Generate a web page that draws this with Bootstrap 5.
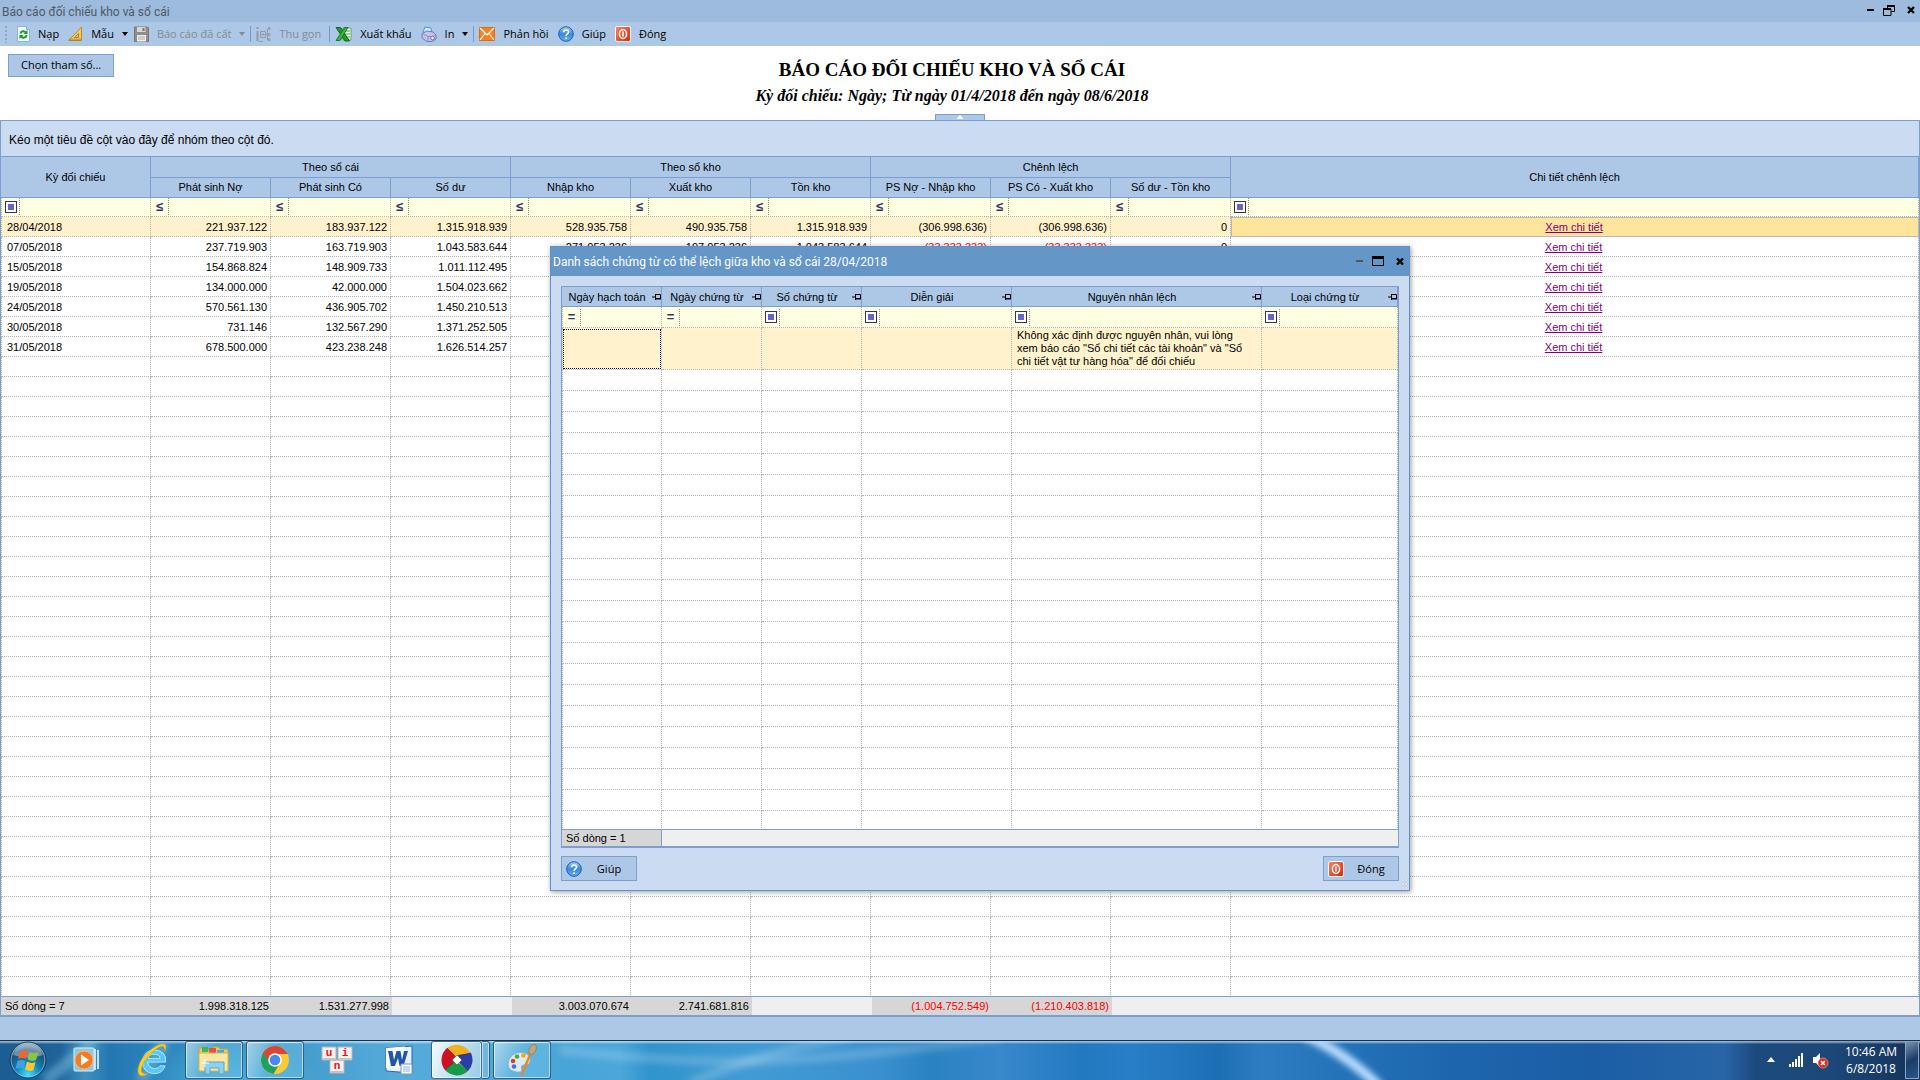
<!DOCTYPE html>
<html lang="vi">
<head>
<meta charset="utf-8">
<meta name="viewport" content="width=device-width, initial-scale=1">
<title>Báo cáo đối chiếu kho và sổ cái</title>
<link href="https://cdn.jsdelivr.net/npm/bootstrap@5.3.0/dist/css/bootstrap.min.css" rel="stylesheet">
<style>
:root { --line:#7ba0cf; --head:#adc7e6; --panel:#cbdbf1; --dots:#b4b4b4; }
body { font-family:"Liberation Sans",Arial,sans-serif; font-size:11px; line-height:14px; color:#000; background:#fff; }
button { font:inherit; color:inherit; background:none; border:0; padding:0; }
svg { display:block; flex:none; }
.ui-text { font-family:"Open Sans","Noto Sans",sans-serif; font-size:11px; line-height:16px; }
.app-title { height:22px; background:#9dbbdc; color:#4d5a68; padding:4px 5px 0 2px; font:12px/16px Roboto,"Noto Sans",sans-serif; }
.tool-strip { height:24px; background:var(--head); padding-left:4px; }
.tool-strip button { display:flex; align-items:center; gap:8px; margin-left:9px; }
.tool-strip .drop + button { margin-left:6px; }
.tool-strip button:disabled { color:#858a92; }
.grip { width:4px; height:18px; background:radial-gradient(circle,#8ea6c4 1px,transparent 1px) 0 0/4px 4px; }
.divider { width:1px; height:16px; background:#6f9dd2; margin-left:8px; margin-right:-4px; }
.drop + .divider { margin-left:5px; }
.drop::after { content:""; border:3px solid transparent; border-top:4px solid; border-bottom:0; }
.report-head { height:74px; }
.report-head h1 { font:bold 19px/22px "Liberation Serif","Times New Roman",serif; margin:0; padding-top:13px; }
.report-head h2 { font:italic bold 16px/20px "Liberation Serif","Times New Roman",serif; margin:5px 0 0; }
.report-titles { padding-right:16px; }
.param-btn { left:8px; top:8px; height:23px; padding:0 12px; background:var(--head); border:1px solid var(--line); white-space:nowrap; }
.fold { left:50%; margin-left:-25px; bottom:0; width:50px; height:6px; background:var(--head); border:1px solid var(--line); border-bottom:0; }
.fold svg { margin:0 auto; }
.group-hint { height:36px; background:var(--panel); border-bottom:1px solid var(--line); padding:3px 0 0 8px; font-size:12px; }
.sheet { border:1px solid var(--line); border-bottom-width:2px; background:#fff; min-height:0; }
.sheet-body { overflow:hidden; min-height:0; }
.sheet table { width:100%; table-layout:fixed; border-collapse:separate; border-spacing:0; }
.sheet th { background:var(--head); border:solid var(--line); border-width:0 1px 1px 0; font-weight:400; text-align:center; padding:0; height:20px; }
.sheet th.tall { height:21px; }
.sheet td { height:20px; padding:1px 3px 0 6px; border:dotted var(--dots); border-width:0 1px 1px 0; white-space:nowrap; overflow:hidden; }
.sheet td:first-child { border-left:1px dotted var(--dots); padding-left:5px; }
.num { text-align:right; }
.sheet td.detail { padding:1px 3px 0 1px; text-align:center; }
.sheet tr.filter td { background:#ffffe1; height:19px; padding:0; }
.op { width:17px; height:17px; border-right:1px dotted #888; flex:none; color:#33336b; font-size:13px; font-weight:bold; box-sizing:content-box; }
.op.box::before { content:""; display:block; width:12px; height:12px; margin-left:3px; border:1px solid #33336b; background:#6464cc; box-shadow:inset 0 0 0 2px #fffff0; }
.filter input { border:0; background:transparent; min-width:0; width:100%; height:17px; padding:0 3px; outline:0; }
.current td { background:#fff2cc; }
.sheet .current td.picked { background:#ffe49c; border:1px solid #b9b9b9; }
.neg { color:#f00; }
.sheet a { color:purple; }
.totals { border-top:1px solid var(--line); background:#efefef; }
.sheet .totals td { border:0; height:18px; padding:0 3px 0 4px; }
.totals .sum { background:#d6d6d6; }
.status { height:23px; background:var(--head); }

.dialog-win { left:550px; top:246px; width:860px; background:var(--panel); border:1px solid #5f93c8; box-shadow:1px 1px 5px rgba(0,0,0,.4); }
.dialog-title { height:29px; background:#6496c8; color:#fff; padding:0 5px 0 2px; font:12px/16px Roboto,"Noto Sans",sans-serif; }
.dialog-body { padding:10px 10px 9px; }
.dialog-win .sheet-body { height:542px; }
.dialog-win td { height:21px; }
.dialog-win .sheet tr.filter td { height:21px; }
.dialog-win th .cap { flex:1 1 auto; }
.dialog-win .sheet .current td { height:42px; white-space:normal; line-height:13px; vertical-align:middle; padding:0 10px 0 5px; }
.dialog-win .sheet .current td.focus-cell { outline:1px dotted #000; outline-offset:-2px; }
.dialog-win .sheet .totals td { height:16px; }
.dialog-win .totals td.sum { border-right:1px solid var(--line); }
.dlg-btn { width:76px; height:25px; background:var(--head); border:1px solid var(--line); display:flex; align-items:center; padding-left:4px; }
.dlg-btn span { flex:1; text-align:center; }
.foot-row { margin-top:8px; }
.resize { right:1px; bottom:1px; }

.task { height:40px; border-top:1px solid #17324f; color:#fff;
 background:
  linear-gradient(180deg,rgba(255,255,255,.5) 0 1px,transparent 3px),
  radial-gradient(ellipse 90px 40px at 230px 40px,rgba(90,195,235,.5),transparent),
  linear-gradient(90deg,#1c5d93 0,#1e6499 60px,#3f90c0 85px,#2478b2 110px,#338fc4 200px,#56abd8 400px,#48a5d7 570px,#4ba7d9 620px,#3094cc 650px,#419bd4 750px,#3a90cf 880px,#2a82c2 930px,#3888cb 1000px,#2379c0 1080px,#287fc7 1130px,#1d6fb4 1220px,#2e7cc2 1260px,#2473b8 1340px,#1d66ad 1450px,#1b5ea6 1590px,#2765a6 1725px,#1d4a7e 1755px,#1c4878 1830px,#15325a 100%); }
.streaks { inset:0; width:100%; height:39px; }
.tb { height:38px; width:58px; display:flex; align-items:center; justify-content:center; }
.tb.open { border:1px solid rgba(20,60,100,.75); border-radius:3px; background:linear-gradient(115deg,rgba(255,255,255,.55),rgba(150,220,245,.28) 45%,rgba(120,205,240,.35)); box-shadow:inset 0 0 0 1px rgba(255,255,255,.55); margin-left:3px; }
.tb.open.front { width:51px; background:linear-gradient(110deg,#f4fafd,#b8dcf0 60%,#9acbe6); }
.tb.open.stack { width:8px; margin-left:0; background:rgba(130,195,230,.6); border-left:0; border-radius:0 3px 3px 0; }
.tray { gap:8px; }
.tray .more { margin-right:4px; }
.clock { font-size:12px; line-height:17px; width:68px; }
.peek { width:14px; height:38px; border:1px solid #8aa4c0; background:linear-gradient(150deg,#7d93ab,#1a3d66 50%,#24588f); margin-right:1px; }
</style>
<script src="https://cdn.jsdelivr.net/npm/bootstrap@5.3.0/dist/js/bootstrap.bundle.min.js"></script>
</head>
<body>
<svg width="0" height="0" class="position-absolute" aria-hidden="true">
 <defs>
  <linearGradient id="gBlue" x1="0" y1="0" x2="0" y2="1"><stop offset="0" stop-color="#9ad0ff"/><stop offset=".5" stop-color="#3b86e0"/><stop offset="1" stop-color="#5fb4f5"/></linearGradient>
  <linearGradient id="gRed" x1="0" y1="0" x2="1" y2="1"><stop offset="0" stop-color="#f5876a"/><stop offset="1" stop-color="#cf2a05"/></linearGradient>
  <symbol id="i-help" viewBox="0 0 16 16"><circle cx="8" cy="8" r="7.3" fill="url(#gBlue)" stroke="#1a5fae"/><path d="M5.6 6.2C5.6 3.2 10.6 3.2 10.6 6.1 10.6 7.9 8.1 8 8.1 9.9M8.1 11.3v1.6" fill="none" stroke="#fff" stroke-width="1.6"/></symbol>
  <symbol id="i-power" viewBox="0 0 16 16"><rect x=".5" y=".5" width="15" height="15" rx="1.5" fill="url(#gRed)" stroke="#fff3ee"/><ellipse cx="8" cy="8" rx="3.6" ry="4.4" fill="none" stroke="#fff" stroke-width="1.5"/><path d="M8 5.5v5" stroke="#fff" stroke-width="1.6"/></symbol>
  <symbol id="i-pin" viewBox="0 0 9 8"><path d="M0 4h3M3.500 1v6M3.500 1.500h5v4M3.500 5.500h5" fill="none" stroke="#000" stroke-width="1"/><path d="M3 5h6v1.500H3z"/></symbol>
  <symbol id="i-x" viewBox="0 0 8 8"><path d="M1 1l6 6M7 1L1 7" stroke="#000" stroke-width="2.3"/></symbol>
 </defs>
</svg>

<div class="d-flex flex-column vh-100 overflow-hidden position-relative">
 <header class="app-title d-flex justify-content-between">
  <span>Báo cáo đối chiếu kho và sổ cái</span>
  <div class="d-flex align-items-start gap-2">
   <button aria-label="Thu nhỏ"><svg width="9" height="11"><path d="M1 6h7" stroke="#000" stroke-width="2"/></svg></button>
   <button aria-label="Khôi phục"><svg width="12" height="12"><path d="M4.500 4.500v-3h7v6h-3M.5 5h7.500v6.500h-7.500z" fill="none" stroke="#000"/><path d="M4 2h8M0 5h8" stroke="#000" stroke-width="2"/></svg></button>
   <button class="ms-1" aria-label="Đóng cửa sổ"><svg width="8" height="12"><use href="#i-x"/></svg></button>
  </div>
 </header>

 <nav class="tool-strip ui-text d-flex align-items-center" aria-label="Thanh công cụ">
  <span class="grip"></span>
  <button><svg width="13" height="16"><path d="M.5.500h9l3 3v12h-12z" fill="#f3faff" stroke="#8cb4dc"/><path d="M9.500.500v3h3" fill="#c8dcf0" stroke="#7ba7d6"/><path d="M3.500 7.500C4 5 7 4.500 9 6.500M9.500 9C9 12 6 12.500 4 10.500" fill="none" stroke="#14a01e" stroke-width="2"/><path d="M10.500 4v4H6.500zM2.500 13V9h4z" fill="#14a01e"/></svg>Nạp</button>
  <button class="drop"><svg width="15" height="16"><path d="M13.500 1v13.500H.7z" fill="#f3c964" stroke="#c08a26"/><path d="M10.500 7.500v4h-4z" fill="#adc7e6" stroke="#b98424"/><path d="M2 14.500v-2M4 14.500v-2M6 14.500v-2M8 14.500v-2M10 14.500v-2M12 14.500v-2" stroke="#8a5a12" stroke-width=".7"/></svg>Mẫu</button>
  <button class="drop" disabled><svg width="15" height="16"><path d="M.5 1h13l1 1v13.500H.5z" fill="#8d8d8d" stroke="#777"/><path d="M3 1h8.500v5H3z" fill="#d7d7d7"/><path d="M8.500 2h2v3h-2z" fill="#777"/><path d="M3 9h9v6.500H3z" fill="#eee"/><path d="M4 11h7M4 13h7" stroke="#aaa"/></svg>Báo cáo đã cất</button>
  <span class="divider"></span>
  <button disabled><svg width="15" height="16" fill="none" stroke="#939aa3"><path d="M1.500 5v10M1.500 1v2" stroke-width="2"/><path d="M4.500 5.500h5v6h-5zM7 7v3M5.500 8.500h3M9.500 8.500h2M11.500 3v11M11.500 3h1M11.500 14h1M3 15.500h4"/><path d="M12.500 1.500h1.500v2h-1.500zM12.500 7.500h1.500v2h-1.500zM12.500 12.500h1.500v2h-1.500z"/></svg>Thu gọn</button>
  <span class="divider"></span>
  <button><svg width="17" height="16"><path d="M8 2h8v12H7z" fill="#e9f6e6" stroke="#6aa76a"/><path d="M10 5h5M10 8h5M10 11h5" stroke="#58a058"/><path d="M1 1.500h4.500L14.500 15h-4.500z" fill="#1f9a2e" stroke="#0d6b1a"/><path d="M13 1.500H9.500L1 14.500h4z" fill="#37b545" stroke="#0d6b1a" stroke-width=".8"/></svg>Xuất khẩu</button>
  <button class="drop"><svg width="16" height="16"><path d="M2 6L4 1l6 1 1 6z" fill="#cfe9ff" stroke="#4c93dc"/><path d="M1 7.500L6 5l6 1 3 3v4l-4 2.500H6L1 12z" fill="#c3c4ea" stroke="#7276b5"/><path d="M1 7.500l6 3h4l4-1.500M7 10.500v5" fill="none" stroke="#8d90c8"/><circle cx="11.500" cy="12" r="1.800" fill="#eef" stroke="#7276b5"/></svg>In</button>
  <span class="divider"></span>
  <button><svg width="16" height="14"><path d="M.5.500h15v13H.5z" fill="#f58220" stroke="#e8650a"/><path d="M1 1l7 7 7-7M1 13l5-6.500M15 13l-5-6.500" fill="none" stroke="#fff" stroke-width="1.200"/></svg>Phản hồi</button>
  <button><svg width="16" height="16"><use href="#i-help"/></svg>Giúp</button>
  <button><svg width="16" height="16"><use href="#i-power"/></svg>Đóng</button>
 </nav>

 <section class="report-head position-relative">
  <button class="param-btn ui-text position-absolute">Chọn tham số...</button>
  <div class="report-titles text-center">
   <h1>BÁO CÁO ĐỐI CHIẾU KHO VÀ SỔ CÁI</h1>
   <h2>Kỳ đối chiếu: Ngày; Từ ngày 01/4/2018 đến ngày 08/6/2018</h2>
  </div>
  <button class="fold position-absolute" aria-label="Thu gọn phần tiêu đề"><svg width="6" height="4"><path d="M3 0l3 3v1H0V3z" fill="#fff"/></svg></button>
 </section>

 <main class="sheet d-flex flex-column flex-grow-1">
  <div class="group-hint d-flex align-items-center flex-shrink-0">Kéo một tiêu đề cột vào đây để nhóm theo cột đó.</div>
  <div class="sheet-body flex-grow-1">
   <table id="mainGrid">
    <colgroup><col style="width:150px"><col span="9" style="width:120px"><col></colgroup>
    <thead>
     <tr><th class="tall" rowspan="2">Kỳ đối chiếu</th><th class="tall" colspan="3">Theo sổ cái</th><th class="tall" colspan="3">Theo sổ kho</th><th class="tall" colspan="3">Chênh lệch</th><th class="tall" rowspan="2">Chi tiết chênh lệch</th></tr>
     <tr><th>Phát sinh Nợ</th><th>Phát sinh Có</th><th>Số dư</th><th>Nhập kho</th><th>Xuất kho</th><th>Tồn kho</th><th>PS Nợ - Nhập kho</th><th>PS Có - Xuất kho</th><th>Số dư - Tồn kho</th></tr>
    </thead>
    <tbody></tbody>
   </table>
  </div>
  <table class="totals flex-shrink-0">
   <colgroup><col style="width:151px"><col span="9" style="width:120px"><col></colgroup>
   <tbody><tr><td class="sum border-0">Số dòng = 7</td><td class="sum num">1.998.318.125</td><td class="sum num">1.531.277.998</td><td></td><td class="sum num">3.003.070.674</td><td class="sum num">2.741.681.816</td><td></td><td class="sum num neg">(1.004.752.549)</td><td class="sum num neg">(1.210.403.818)</td><td></td><td></td></tr></tbody>
  </table>
 </main>
 <div class="status flex-shrink-0"></div>

 <footer class="task ui-text d-flex align-items-center position-relative flex-shrink-0">
  <svg class="streaks position-absolute" viewBox="0 0 1920 39" preserveAspectRatio="none" aria-hidden="true">
   <defs><filter id="soft"><feGaussianBlur stdDeviation="3"/></filter></defs>
   <g filter="url(#soft)" fill="none">
    <path d="M560 9Q700 25 800 18T1000 -4" stroke="#fff" stroke-opacity=".18" stroke-width="9"/>
    <path d="M690 42Q770 8 850 -4" stroke="#fff" stroke-opacity=".18" stroke-width="10"/>
    <path d="M1305 -6Q1345 12 1380 46" stroke="#b9dcff" stroke-width="10"/>
    <path d="M45 40L95 0M140 40L165 0" stroke="#8fd0ef" stroke-opacity=".4" stroke-width="12"/>
   </g>
  </svg>
  <button class="tb position-relative" aria-label="Start"><svg width="40" height="38" viewBox="0 0 40 38">
   <defs><radialGradient id="orb" cx=".5" cy=".9" r=".9"><stop offset="0" stop-color="#3de0ff"/><stop offset=".4" stop-color="#0f7fb4"/><stop offset=".75" stop-color="#1b4f78"/><stop offset="1" stop-color="#9db9cb"/></radialGradient></defs>
   <circle cx="19" cy="19" r="18" fill="url(#orb)" stroke="#17405f"/><circle cx="19" cy="19" r="16.800" fill="none" stroke="#a8d3e8" stroke-opacity=".6"/>
   <path d="M4 14Q8 3 19 3t15 11q-14 5-30 0z" fill="#fff" opacity=".35"/>
   <path d="M11 11q4-3 8-1l-2 8q-4-2-8 0z" fill="#f0642d"/><path d="M20.500 11q4 2 9 0l-2.500 8q-4 2-8.500-.500z" fill="#8cc63f"/><path d="M8.500 20q4-2 8 0l-2 8q-4-2-8 0z" fill="#3fa0e8"/><path d="M18 20.500q4 2.500 8.500.500l-2 8q-4 2-8.500-.500z" fill="#fdc62f"/></svg></button>
  <button class="tb position-relative" aria-label="Windows Media Player"><svg width="28" height="28"><path d="M25 4v19M22 3v21" stroke="#bfe3f5" stroke-width="2"/><rect x="1" y="2" width="20" height="23" rx="1" fill="#8cc8e6" stroke="#d7eef9"/><circle cx="11" cy="14" r="9" fill="#f47b20" stroke="#fbb36b"/><path d="M8 8.500l8 5.500-8 5.500z" fill="#fff"/></svg></button>
  <button class="tb position-relative ms-2" aria-label="Internet Explorer"><svg width="34" height="36" viewBox="0 0 32 34"><path d="M28 19H11q1 6 6.500 6 4 0 5-2.500h5Q25 30 17 30 6 29 6 18.500 7 8 17 7.500 29 8 28 19zM11.500 15.500h11.300Q22 11.500 17 11.500t-5.500 4z" fill="#58c8f4" stroke="#d6f3ff" stroke-width=".7"/><path d="M27 9q3-6-1-7-5-1-14 7T2 25q-1 7 4 7 2 0 5-2-7 1-6-5 2-8 10-15t10.500-6q2 1 1.500 5z" fill="#fcd116" stroke="#dd9d10" stroke-width=".5"/></svg></button>
  <button class="tb open position-relative" aria-label="Windows Explorer"><svg width="34" height="32"><path d="M2 4h6l1 2h7V3h6l1 2h8v21H2z" fill="#e8c968" stroke="#c6a03c"/><path d="M5 3h6v5H5z" fill="#3fb54a"/><path d="M12 4h7v5h-7z" fill="#e2543c"/><path d="M20 6h7v5h-7z" fill="#4aa6e8"/><path d="M2 9h29v18H2z" fill="#f9e6a0" stroke="#d5b252"/><path d="M8 18h19v12h-5v-6h-9v6H8z" fill="#8cd1ee" stroke="#55a8cf"/><path d="M8 15v8M4 19h8" stroke="#fff"/></svg></button>
  <button class="tb open position-relative" aria-label="Google Chrome"><svg width="30" height="30" viewBox="0 0 30 30"><circle cx="15" cy="15" r="14" fill="#fbc933"/><path d="M15 15L2.900 8A14 14 0 0127.100 8L28 9H15z" fill="#dc4437"/><path d="M2.900 8A14 14 0 0013.500 29l6.500-11-5 3z" fill="#1fa15d"/><path d="M2.900 8L10 19l5-4V9z" fill="#1fa15d"/><path d="M2.900 8A14 14 0 0127.200 8.500H15Q10 9 9.200 16z" fill="#dc4437"/><circle cx="15" cy="15" r="6.800" fill="#fff"/><circle cx="15" cy="15" r="5.300" fill="#4a87ee"/></svg></button>
  <button class="tb position-relative ms-1" aria-label="UniKey"><svg width="32" height="28" font-family="Liberation Mono,monospace" font-weight="bold" font-size="11" fill="#e01818" text-anchor="middle"><path d="M1 1h14v13H1zM17 1h14v13H17zM9 14h14v13H9z" fill="#f5f1f0" stroke="#b8b4b4"/><path d="M2 13h12M18 13h12M10 26h12" stroke="#c9c4c4" stroke-width="2"/><text x="8" y="10">u</text><text x="24" y="10">i</text><text x="16" y="23">n</text></svg></button>
  <button class="tb position-relative ms-1" aria-label="Microsoft Word"><svg width="30" height="32"><path d="M2 4L28 2v27L2 27z" fill="#e8f1fb" stroke="#2b62b4"/><path d="M2 4l19-1.500v20L2 24z" fill="#fff"/><path d="M4 7h4.500l1.500 9 2.500-9h4l1.500 9 2-9H24l-4.500 15h-4L14 14l-3 8H7z" fill="#1f56ad"/><path d="M17 20h11v10H17z" fill="#fff" stroke="#6d9bd8"/><path d="M19 23h7M19 25h7M19 27h7" stroke="#8fb4e4"/></svg></button>
  <button class="tb open front position-relative" aria-label="MISA"><svg width="34" height="34" viewBox="-17 -17 34 34"><path d="M-10-12A16 16 0 0114-6L1-4-2-3z" fill="#f2ae1c"/><path d="M14-7A16 16 0 0111 11L3 3 1-5z" fill="#2a3ea8"/><path d="M11 11A16 16 0 01-12 10L-3 1 3 4z" fill="#169a48"/><path d="M-12 10A16 16 0 01-10-12l9 9-3 6z" fill="#cf1126"/><path d="M-10-12L-1-3M14-7L2-4M11 11L2 2M-12 10l9-8" stroke="#333" stroke-width=".6"/><path d="M0-5l5 5-5 5-5-5z" fill="#fff" stroke="#333" stroke-width=".5"/></svg></button>
  <span class="tb open stack position-relative"></span>
  <button class="tb open position-relative" aria-label="Paint"><svg width="34" height="34"><path d="M4 16q6-9 16-6 8 4 4 11-3 2-6 1-3 1-1 4 0 4-6 3Q0 27 4 16z" fill="#dbeaf6" stroke="#86acca"/><circle cx="8" cy="18" r="2.300" fill="#e23b2c"/><circle cx="12" cy="13.500" r="2.300" fill="#49a942"/><circle cx="18.500" cy="12.500" r="2.300" fill="#f3a51c"/><circle cx="9" cy="23.500" r="2.300" fill="#3c78d0"/><path d="M27 7L17 31" stroke="#e08a2e" stroke-width="2.600" stroke-linecap="round"/><path d="M24 10q-1-7 6-9 4 5-3 11z" fill="#c9a47a" stroke="#8d6a43" stroke-width=".6"/></svg></button>

  <div class="tray d-flex align-items-center ms-auto position-relative">
   <button aria-label="Hiện biểu tượng ẩn" class="more"><svg width="10" height="6"><path d="M5 0l4 5H1z" fill="#fff"/></svg></button>
   <svg width="16" height="16" fill="#fff"><path d="M1 12h2v3H1zM4 10h2v5H4zM7 7h2v8H7zM10 4h2v11h-2zM13 1h2v14h-2z"/></svg>
   <svg width="17" height="18"><path d="M1 6h3l4-4v14l-4-4H1z" fill="#fff"/><circle cx="11" cy="12" r="5" fill="#dd2a1b" stroke="#f7b0a8" stroke-width=".6"/><path d="M9 10l4 4M13 10l-4 4" stroke="#fff" stroke-width="1.500"/></svg>
   <div class="d-flex align-items-center"><div class="clock text-center">10:46 AM<br>6/8/2018</div>
   <button class="peek" aria-label="Hiện màn hình nền"></button></div>
  </div>
 </footer>

 <section class="dialog-win position-absolute" role="dialog" aria-labelledby="dlgTitle">
  <div class="dialog-title d-flex justify-content-between align-items-center">
   <span id="dlgTitle">Danh sách chứng từ có thể lệch giữa kho và sổ cái 28/04/2018</span>
   <div class="d-flex gap-2">
    <button aria-label="Thu nhỏ"><svg width="9" height="10"><path d="M1 4h7" stroke="#555" stroke-width="2"/></svg></button>
    <button aria-label="Phóng to"><svg width="12" height="11"><path d="M.5.500h11v9H.5z" fill="none" stroke="#000"/><path d="M0 1.500h12" stroke="#000" stroke-width="3"/></svg></button>
    <button class="ms-1" aria-label="Đóng hộp thoại"><svg width="8" height="9"><use href="#i-x"/></svg></button>
   </div>
  </div>
  <div class="dialog-body">
   <div class="sheet">
    <div class="sheet-body">
     <table id="dlgGrid">
      <colgroup><col span="3" style="width:100px"><col style="width:150px"><col style="width:250px"><col></colgroup>
      <thead><tr></tr></thead>
      <tbody></tbody>
     </table>
    </div>
    <table class="totals">
     <colgroup><col style="width:100px"><col></colgroup>
     <tbody><tr><td class="sum border-start-0">Số dòng = 1</td><td></td></tr></tbody>
    </table>
   </div>
   <div class="foot-row d-flex justify-content-between ui-text">
    <button class="dlg-btn"><svg width="16" height="16"><use href="#i-help"/></svg><span>Giúp</span></button>
    <button class="dlg-btn"><svg width="16" height="16"><use href="#i-power"/></svg><span>Đóng</span></button>
   </div>
  </div>
  <svg class="resize position-absolute" width="10" height="10" fill="#fff" stroke="#9fb3cc" stroke-width=".4"><path d="M7 0h2v2H7zM4 4h2v2H4zM7 4h2v2H7zM1 8h2v2H1zM4 8h2v2H4zM7 8h2v2H7z"/></svg>
 </section>
</div>

<script>
const filterRow = (ops, names) => '<tr class="filter">' + ops.map((op, i) =>
  `<td><div class="d-flex align-items-center"><button class="op ${op === 'box' ? 'box d-flex align-items-center' : ''}" aria-label="Điều kiện lọc ${names[i]}">${op === 'box' ? '' : op}</button><input type="text" aria-label="Lọc ${names[i]}"></div></td>`).join('') + '</tr>';
const blankRows = (n, cols) => ('<tr>' + '<td></td>'.repeat(cols) + '</tr>').repeat(n);

const rows = [
 ['28/04/2018','221.937.122','183.937.122','1.315.918.939','528.935.758','490.935.758','1.315.918.939','(306.998.636)','(306.998.636)','0'],
 ['07/05/2018','237.719.903','163.719.903','1.043.583.644','271.053.236','197.053.236','1.043.583.644','(33.333.333)','(33.333.333)','0'],
 ['15/05/2018','154.868.824','148.909.733','1.011.112.495'],
 ['19/05/2018','134.000.000','42.000.000','1.504.023.662'],
 ['24/05/2018','570.561.130','436.905.702','1.450.210.513'],
 ['30/05/2018','731.146','132.567.290','1.371.252.505'],
 ['31/05/2018','678.500.000','423.238.248','1.626.514.257']
];
const mainNames = ['Kỳ đối chiếu','Phát sinh Nợ','Phát sinh Có','Số dư','Nhập kho','Xuất kho','Tồn kho','PS Nợ - Nhập kho','PS Có - Xuất kho','Số dư - Tồn kho','Chi tiết chênh lệch'];
document.querySelector('#mainGrid tbody').innerHTML =
 filterRow(['box', ...Array(9).fill('≤'), 'box'], mainNames) +
 rows.map((r, i) => `<tr class="${i ? '' : 'current'}">` +
  Array.from({length:10}, (_, c) => `<td class="${c ? 'num' : ''} ${i && (r[c] || '')[0] === '(' ? 'neg' : ''}">${r[c] || ''}</td>`).join('') +
  `<td class="detail ${i ? '' : 'picked'}"><a href="#">Xem chi tiết</a></td></tr>`).join('') +
 blankRows(32, 11);

const dlgNames = ['Ngày hạch toán','Ngày chứng từ','Số chứng từ','Diễn giải','Nguyên nhân lệch','Loại chứng từ'];
document.querySelector('#dlgGrid thead tr').innerHTML = dlgNames.map(n =>
 `<th><div class="d-flex align-items-center"><span class="cap">${n}</span><svg width="9" height="8"><use href="#i-pin"/></svg></div></th>`).join('');
document.querySelector('#dlgGrid tbody').innerHTML =
 filterRow(['=','=','box','box','box','box'], dlgNames) +
 '<tr class="current"><td class="focus-cell"></td><td></td><td></td><td></td><td>Không xác định được nguyên nhân, vui lòng xem báo cáo "Sổ chi tiết các tài khoản" và "Sổ chi tiết vật tư hàng hóa" để đối chiếu</td><td></td></tr>' +
 blankRows(22, 6);
</script>
</body>
</html>
